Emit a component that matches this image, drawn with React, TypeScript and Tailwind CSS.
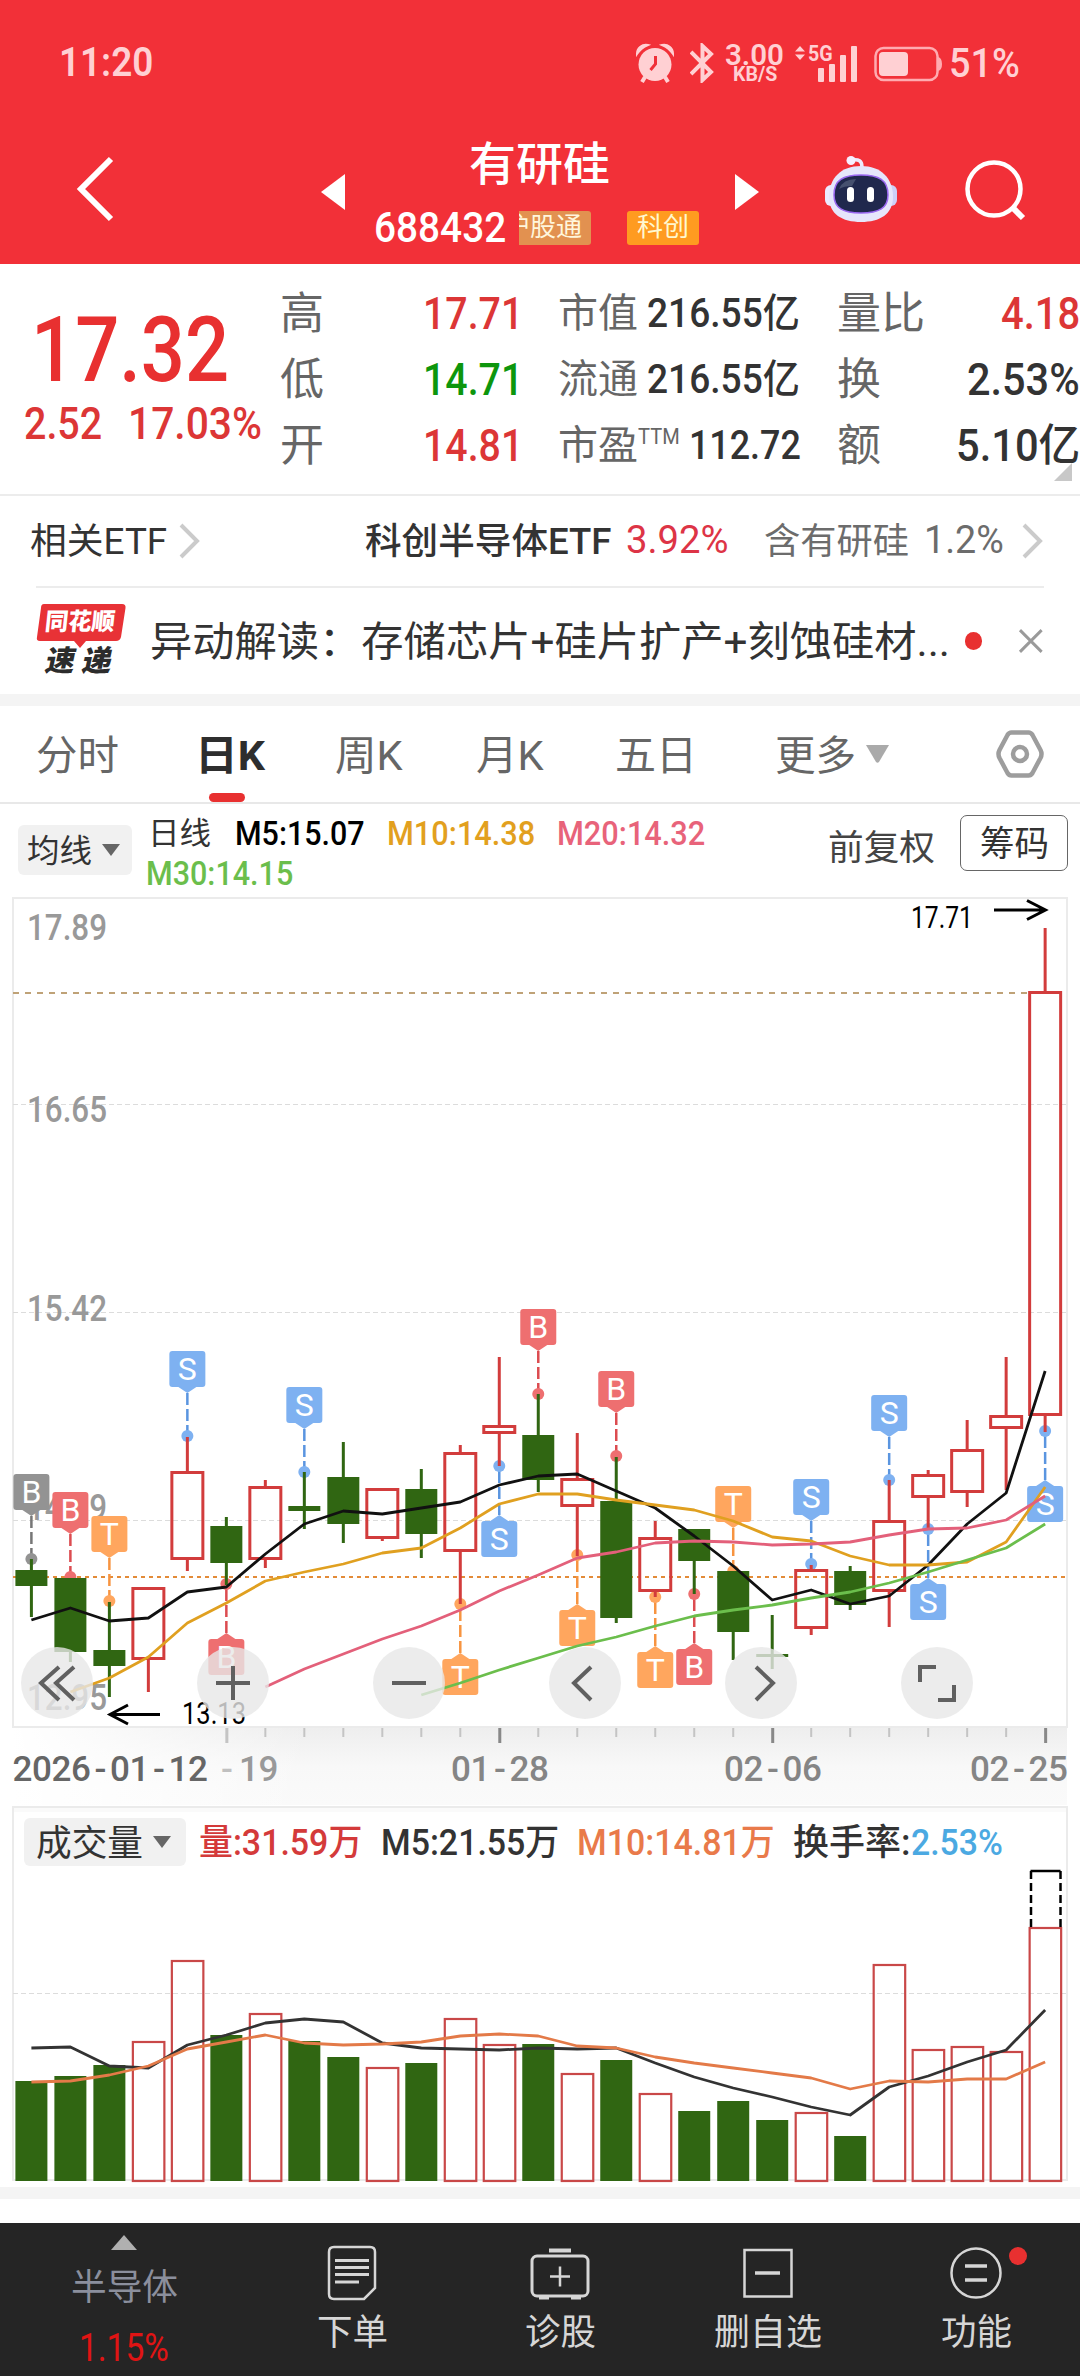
import { useLayoutEffect, useRef, useState, type ReactNode } from "react";

/** Single-line label whose glyphs are condensed or widened to fill its box. */
function Fit({ className = "", children }: { className?: string; children: ReactNode }) {
  const box = useRef<HTMLSpanElement>(null);
  const inner = useRef<HTMLSpanElement>(null);
  const [scale, setScale] = useState(1);
  useLayoutEffect(() => {
    if (box.current && inner.current && inner.current.offsetWidth > 0) {
      setScale(box.current.clientWidth / inner.current.offsetWidth);
    }
  }, []);
  return (
    <span ref={box} className={`inline-flex shrink-0 justify-start whitespace-nowrap leading-none ${className}`}>
      <span ref={inner} className="inline-block shrink-0 origin-left" style={{ transform: `scaleX(${scale})` }}>
        {children}
      </span>
    </span>
  );
}

function StatusBar() {
  return (
    <div className="flex h-[126px] items-center pl-[59px] text-[#ffd0d3]">
      <Fit className="w-[94px] text-[40px] font-semibold">11:20</Fit>
      <svg className="ml-[483px] h-[40px] w-[38px]" viewBox="0 0 38 40" fill="currentColor">
        <circle cx="19" cy="21.5" r="16.5" />
        <path d="M1 11 A9 9 0 0 1 12 2 Q5 5 1 11Z M37 11 A9 9 0 0 0 26 2 Q33 5 37 11Z" stroke="currentColor" strokeWidth="2" />
        <path d="M9 34l-3 5M29 34l3 5" stroke="currentColor" strokeWidth="4" />
        <path d="M19.500 13v8l-5 6" fill="none" stroke="#f03038" strokeWidth="3" />
      </svg>
      <svg className="ml-[16px] h-[40px] w-[24px]" viewBox="0 0 24 40" fill="none" stroke="currentColor" strokeWidth="4">
        <path d="M1 9L21 29L12.500 37V3L21 11L1 31" />
      </svg>
      <div className="-mt-[2px] ml-[11px] flex flex-col items-center">
        <Fit className="w-[59px] text-[30px] font-semibold">3.00</Fit>
        <Fit className="-mt-[6px] w-[44px] text-[20px] font-bold">KB/S</Fit>
      </div>
      <div className="relative ml-[11px] h-[40px] w-[64px]">
        <svg className="h-[40px] w-[64px]" viewBox="0 0 64 40" fill="currentColor">
          <path d="M0 8.500L5 3l5 5.500zM0 11.500L5 17l5-5.500z" />
          <rect x="23" y="25" width="6" height="14" rx="1" />
          <rect x="34" y="21" width="6" height="18" rx="1" />
          <rect x="45" y="12" width="6" height="27" rx="1" />
          <rect x="56" y="3" width="6" height="36" rx="1" />
        </svg>
        <Fit className="absolute left-[13px] top-0 w-[25px] text-[22px] font-bold">5G</Fit>
      </div>
      <svg className="ml-[15px] mt-[1px] h-[36px] w-[68px]" viewBox="0 0 68 36">
        <rect x="1.500" y="2" width="62" height="32" rx="8" fill="none" stroke="#ffabb0" strokeWidth="2.500" />
        <rect x="5" y="6" width="29" height="24" rx="4" fill="currentColor" />
        <path d="M64 11q4 1 4 7t-4 7z" fill="#ffabb0" />
      </svg>
      <Fit className="ml-[7px] w-[71px] translate-y-px text-[40px] font-medium">51%</Fit>
    </div>
  );
}

function Robot() {
  return (
    <svg className="ml-[65px] h-[68px] w-[74px]" viewBox="0 0 74 68">
      <path d="M28 5Q38 3 38 12" fill="none" stroke="#eeeafc" strokeWidth="3.500" />
      <circle cx="27" cy="5.500" r="4.500" fill="#f6efff" />
      <rect x="1" y="30" width="12" height="21" rx="6" fill="#eceaff" />
      <rect x="61" y="30" width="12" height="21" rx="6" fill="#cdd0f8" />
      <path d="M37 11C57 11 69 23 69 42C69 59 56 67 37 67C18 67 5 59 5 42C5 23 17 11 37 11Z" fill="#e6e6fb" />
      <path d="M37 20C55 20 64 25 64 40C64 53 55 58 37 58C19 58 10 53 10 40C10 25 19 20 37 20Z" fill="#20284d" stroke="#9a68f0" strokeWidth="1.500" />
      <path d="M15 34q4-10 17-10l-4 7q-8 0-13 3z" fill="#46506f" />
      <rect x="23" y="32" width="7" height="15" rx="3.500" fill="#fff" />
      <rect x="43" y="32" width="7" height="15" rx="3.500" fill="#fff" />
    </svg>
  );
}

function Header() {
  return (
    <header className="h-[264px] bg-[#f23038]">
      <StatusBar />
      <div className="flex h-[126px] items-center text-white">
        <svg className="ml-[75px] h-[66px] w-[40px]" viewBox="0 0 40 66" fill="none" stroke="currentColor" strokeWidth="6">
          <path d="M36 3L6 33L36 63" />
        </svg>
        <svg className="ml-[206px] mt-[6px] h-[36px] w-[24px]" viewBox="0 0 24 36" fill="currentColor">
          <path d="M24 0V36L0 18Z" />
        </svg>
        <div className="ml-[29px] mt-[7px] flex w-[326px] flex-col">
          <Fit className="ml-[95px] w-[141px] text-[46px] font-medium">有研硅</Fit>
          <div className="mt-[24px] flex h-[34px] items-center">
            <Fit className="w-[132px] text-[42px] font-medium">688432</Fit>
            <span className="ml-[13px] flex h-[34px] w-[72px] justify-end overflow-hidden rounded-r-[3px] bg-[#e29150] pr-[9px] text-[26px] leading-[32px] text-[#fff6dc]">
              <span className="shrink-0 whitespace-nowrap">沪股通</span>
            </span>
            <span className="ml-[36px] flex h-[34px] w-[72px] justify-center rounded-[3px] bg-[#ff9b20] text-[26px] leading-[32px] text-[#fff8d0]">
              科创
            </span>
          </div>
        </div>
        <svg className="ml-[35px] mt-[6px] h-[36px] w-[24px]" viewBox="0 0 24 36" fill="currentColor">
          <path d="M0 0V36L24 18Z" />
        </svg>
        <Robot />
        <svg className="ml-[66px] mt-[4px] h-[64px] w-[64px]" viewBox="0 0 64 64" fill="none" stroke="currentColor" strokeWidth="4.500">
          <circle cx="30" cy="30" r="26.500" />
          <path d="M48 48L59 59" strokeWidth="6" />
        </svg>
      </div>
    </header>
  );
}

function Quote() {
  return (
    <section className="relative flex h-[232px] border-b-2 border-[#ececec] text-[#333]">
      <div className="w-[280px] pt-[41px] text-[#e83030]">
        <Fit className="ml-[31px] w-[198px] text-[91px] font-medium">17.32</Fit>
        <div className="mt-[5px] flex text-[45px] font-medium text-[#dc3636]">
          <Fit className="ml-[24px] w-[78px]">2.52</Fit>
          <Fit className="ml-[26px] w-[134px]">17.03%</Fit>
        </div>
      </div>
      <div className="w-[278px] pt-[17px] text-[44px]">
        <div className="flex h-[66px] items-center">
          <span className="w-[143px] leading-none text-[#666]">高</span>
          <Fit className="w-[100px] font-medium text-[#dc3636]">17.71</Fit>
        </div>
        <div className="flex h-[66px] items-center">
          <span className="w-[143px] leading-none text-[#666]">低</span>
          <Fit className="w-[100px] font-medium text-[#0d960d]">14.71</Fit>
        </div>
        <div className="flex h-[66px] items-center">
          <span className="w-[143px] leading-none text-[#666]">开</span>
          <Fit className="w-[100px] font-medium text-[#dc3636]">14.81</Fit>
        </div>
      </div>
      <div className="w-[279px] pt-[17px] text-[40px]">
        <div className="flex h-[66px] items-center">
          <Fit className="w-[80px] text-[#666]">市值</Fit>
          <Fit className="ml-[9px] w-[153px] font-medium">216.55亿</Fit>
        </div>
        <div className="flex h-[66px] items-center">
          <Fit className="w-[80px] text-[#666]">流通</Fit>
          <Fit className="ml-[9px] w-[153px] font-medium">216.55亿</Fit>
        </div>
        <div className="flex h-[66px] items-center">
          <Fit className="w-[80px] text-[#666]">市盈</Fit>
          <Fit className="mb-[18px] w-[42px] text-[22px] text-[#666]">TTM</Fit>
          <Fit className="ml-[9px] w-[112px] font-medium">112.72</Fit>
        </div>
      </div>
      <div className="w-[243px] pt-[17px] text-[44px]">
        <div className="flex h-[66px] items-center justify-between">
          <Fit className="w-[88px] text-[#666]">量比</Fit>
          <Fit className="w-[79px] font-medium text-[#dc3636]">4.18</Fit>
        </div>
        <div className="flex h-[66px] items-center justify-between">
          <Fit className="w-[44px] text-[#666]">换</Fit>
          <Fit className="w-[113px] font-medium">2.53%</Fit>
        </div>
        <div className="flex h-[66px] items-center justify-between">
          <Fit className="w-[44px] text-[#666]">额</Fit>
          <Fit className="w-[124px] font-medium">5.10亿</Fit>
        </div>
      </div>
      <svg className="absolute right-[8px] bottom-[13px] h-[18px] w-[18px]" viewBox="0 0 18 18" fill="#c8c8c8">
        <path d="M18 0V18H0Z" />
      </svg>
    </section>
  );
}

function Chevron({ className }: { className: string }) {
  return (
    <svg className={`h-[36px] w-[21px] ${className}`} viewBox="0 0 21 36" fill="none" stroke="#cbcbcb" strokeWidth="4">
      <path d="M2 2L18 18L2 34" />
    </svg>
  );
}

function EtfRow() {
  return (
    <div className="flex h-[90px] items-center text-[36px] text-[#333]">
      <Fit className="ml-[30px] w-[137px] translate-y-px">相关ETF</Fit>
      <Chevron className="ml-[12px]" />
      <Fit className="ml-[165px] w-[246px] translate-y-px font-medium">科创半导体ETF</Fit>
      <Fit className="ml-[15px] mb-[1px] w-[103px] text-[39px] text-[#dd3446]">3.92%</Fit>
      <Fit className="ml-[35px] w-[145px] translate-y-px text-[#6c6c6c]">含有研硅</Fit>
      <Fit className="ml-[15px] mb-[1px] w-[80px] text-[39px] text-[#6c6c6c]">1.2%</Fit>
      <Chevron className="ml-[18px]" />
    </div>
  );
}

function NewsRow() {
  return (
    <div className="mx-[36px] flex h-[108px] items-center border-t-2 border-[#ececec] text-[#333]">
      <div className="relative h-[74px] w-[90px]">
        <svg className="absolute top-0 left-0 h-[44px] w-[90px]" viewBox="0 0 90 44" fill="#e83236">
          <path d="M8 0H86Q90 0 89.500 4L85 33Q84 37 80 37H50L44 44L38 37H4Q0 37 1 33L5 4Q5 0 8 0Z" />
        </svg>
        <Fit className="absolute top-[6px] left-[9px] w-[70px] -skew-x-6 text-[24px] font-black text-white">同花顺</Fit>
        <Fit className="absolute top-[43px] left-[10px] w-[66px] -skew-x-12 text-[29px] font-black text-[#2c2c2c]">速 递</Fit>
      </div>
      <Fit className="ml-[25px] w-[800px] translate-y-px text-[41px]">异动解读：存储芯片+硅片扩产+刻蚀硅材...</Fit>
      <span className="ml-[15px] h-[18px] w-[18px] rounded-full bg-[#e83030]" />
      <svg className="ml-[36px] h-[26px] w-[26px]" viewBox="0 0 26 26" fill="none" stroke="#9a9a9a" strokeWidth="3">
        <path d="M2 2L24 24M24 2L2 24" />
      </svg>
    </div>
  );
}

function Tabs() {
  return (
    <nav className="relative flex h-[98px] items-center border-b-2 border-[#e8e8e8] text-[41px] text-[#666]">
      <Fit className="ml-[36px] w-[83px] translate-y-[2px]">分时</Fit>
      <Fit className="ml-[76px] w-[70px] translate-y-[2px] font-bold text-[#2e2e2e]">日K</Fit>
      <Fit className="ml-[70px] w-[68px] translate-y-[2px]">周K</Fit>
      <Fit className="ml-[73px] w-[68px] translate-y-[2px]">月K</Fit>
      <Fit className="ml-[71px] w-[82px] translate-y-[2px]">五日</Fit>
      <Fit className="ml-[78px] w-[81px] translate-y-[2px]">更多</Fit>
      <svg className="ml-[10px] h-[18px] w-[23px]" viewBox="0 0 23 18" fill="#aaa">
        <path d="M0 0H23L13 17Q11.500 18.500 10 17Z" />
      </svg>
      <svg className="ml-[107px] h-[48px] w-[48px]" viewBox="0 0 48 48" fill="none" stroke="#9d9d9d">
        <path d="M15.500 2.500H32.500Q35 2.500 36.500 5L44.500 20Q46.500 24 44.500 28L36.500 43Q35 45.500 32.500 45.500H15.500Q13 45.500 11.500 43L3.500 28Q1.500 24 3.500 20L11.500 5Q13 2.500 15.500 2.500Z" strokeWidth="4.500" />
        <circle cx="24" cy="24" r="7" strokeWidth="4.500" />
      </svg>
      <span className="absolute bottom-0 left-[209px] h-[9px] w-[36px] rounded-full bg-[#e83030]" />
    </nav>
  );
}

function DropArrow({ className }: { className: string }) {
  return (
    <svg className={`h-[12px] w-[18px] ${className}`} viewBox="0 0 18 12" fill="#666">
      <path d="M0 0H18L9 12Z" />
    </svg>
  );
}

function Averages() {
  return (
    <div className="flex h-[92px] pl-[18px] text-[#333]">
      <div className="mt-[21px] flex h-[50px] w-[114px] items-center rounded-[6px] bg-[#f1f1f1] pl-[9px] text-[32px]">
        <Fit className="w-[65px] translate-y-px">均线</Fit>
        <DropArrow className="ml-[10px]" />
      </div>
      <div className="ml-[14px] w-[680px] pt-[12px] text-[33px] font-medium">
        <div className="flex h-[34px] items-center">
          <Fit className="ml-[2px] w-[63px] text-[31px] font-normal">日线</Fit>
          <Fit className="ml-[24px] w-[130px] text-black">M5:15.07</Fit>
          <Fit className="ml-[22px] w-[148px] text-[#e2a01e]">M10:14.38</Fit>
          <Fit className="ml-[22px] w-[148px] text-[#e8637a]">M20:14.32</Fit>
        </div>
        <div className="mt-[6px] flex h-[34px] items-center">
          <Fit className="w-[147px] text-[#6bbe4c]">M30:14.15</Fit>
        </div>
      </div>
      <Fit className="ml-[2px] mt-[27px] w-[107px] text-[35px] text-[#444]">前复权</Fit>
      <div className="ml-[25px] mt-[11px] flex h-[56px] w-[108px] items-center justify-center rounded-[7px] border border-[#666] text-[35px]">
        <Fit className="w-[69px] translate-y-px">筹码</Fit>
      </div>
    </div>
  );
}

const RED = "#d23c3c";
const GREEN = "#306612";
const xAt = (i: number) => 31.4 + i * 38.99;

// [rising, high, body top, body bottom, low] in chart pixels
const candles: [number, number, number, number, number][] = [
  [0, 1559, 1570, 1586, 1617], [0, 1578, 1578, 1652, 1662], [0, 1602, 1650, 1666, 1697],
  [1, 1587, 1587, 1660, 1692], [1, 1437, 1471, 1560, 1571], [0, 1517, 1526, 1563, 1585],
  [1, 1480, 1486, 1560, 1568], [0, 1472, 1506, 1511, 1529], [0, 1442, 1477, 1524, 1543],
  [1, 1488, 1488, 1539, 1541], [0, 1469, 1489, 1534, 1558], [1, 1445, 1452, 1552, 1604],
  [1, 1357, 1425, 1434, 1466], [0, 1394, 1435, 1480, 1492], [1, 1433, 1478, 1507, 1556],
  [0, 1457, 1501, 1618, 1623], [1, 1521, 1537, 1592, 1597], [0, 1529, 1529, 1561, 1594],
  [0, 1571, 1571, 1632, 1660], [0, 1615, 1654, 1657, 1669], [1, 1565, 1569, 1629, 1635],
  [0, 1566, 1571, 1605, 1610], [1, 1480, 1520, 1592, 1627], [1, 1470, 1474, 1498, 1529],
  [1, 1420, 1449, 1493, 1507], [1, 1357, 1415, 1429, 1490], [1, 928, 991, 1416, 1432],
];

const ma5 = [1620, 1608, 1621, 1618, 1592, 1587, 1554, 1524, 1511, 1514, 1508, 1502, 1485, 1476, 1474, 1491, 1508, 1536, 1566, 1600, 1590, 1604, 1596, 1565, 1524, 1493, 1371];
const ma10 = [1692, 1678, 1657, 1623, 1603, 1581, 1572, 1564, 1553, 1548, 1528, 1504, 1494, 1494, 1500, 1505, 1510, 1521, 1537, 1541, 1556, 1565, 1565, 1562, 1542, 1487];
const ma20 = [1687, 1669, 1654, 1639, 1626, 1610, 1591, 1575, 1558, 1552, 1543, 1541, 1542, 1545, 1544, 1542, 1535, 1529, 1528, 1520, 1496];
const ma30 = [1695, 1683, 1670, 1658, 1646, 1637, 1626, 1616, 1610, 1605, 1598, 1592, 1583, 1572, 1560, 1548, 1524];

const points = (ys: number[], start = 0) => ys.map((y, k) => `${xAt(start + k)},${y}`).join(" ");

const BLUE = ["#7eb1f1", "#5a95e0"];
const ROSE = ["#ee6f70", "#dc4c50"];
const ORANGE = ["#ffa65e", "#f79440"];
const GRAY = ["#939393", "#777777"];
// [candle index, letter, palette, dot y, badge above the dot]
const markers: [number, string, string[], number, boolean][] = [
  [0, "B", GRAY, 1559, true], [1, "B", ROSE, 1577, true], [2, "T", ORANGE, 1601, true],
  [4, "S", BLUE, 1436, true], [5, "B", ROSE, 1584, false], [7, "S", BLUE, 1472, true],
  [11, "T", ORANGE, 1604, false], [12, "S", BLUE, 1466, false], [13, "B", ROSE, 1394, true],
  [14, "T", ORANGE, 1555, false], [15, "B", ROSE, 1456, true], [16, "T", ORANGE, 1597, false],
  [17, "B", ROSE, 1594, false], [18, "T", ORANGE, 1571, true], [20, "S", BLUE, 1564, true],
  [22, "S", BLUE, 1480, true], [23, "S", BLUE, 1529, false], [26, "S", BLUE, 1431, false],
];

function Marker({ i, letter, palette, y, above }: { i: number; letter: string; palette: string[]; y: number; above: boolean }) {
  const x = xAt(i);
  const top = above ? y - 85 : y + 55;
  const edge = above ? top + 36 : top;
  const tip = above ? edge + 6 : edge - 6;
  return (
    <g>
      <line x1={x} x2={x} y1={tip} y2={y} stroke={palette[1]} strokeWidth="2.500" strokeDasharray="12 4" />
      <circle cx={x} cy={y} r="6" fill={palette[0]} />
      <path d={`M${x - 9} ${edge}H${x + 9}L${x} ${tip}Z`} fill={palette[0]} />
      <rect x={x - 18} y={top} width="36" height="36" rx="3" fill={palette[0]} />
      <text x={x} y={top + 29} textAnchor="middle" fontSize="32" fill="#fff">{letter}</text>
    </g>
  );
}

function ChartText({ x, y, w, size, fill, weight = 400, children }: { x: number; y: number; w: number; size: number; fill: string; weight?: number; children: string }) {
  return (
    <text x={x} y={y} textLength={w} lengthAdjust="spacingAndGlyphs" fontSize={size} fill={fill} fontWeight={weight}>
      {children}
    </text>
  );
}

/** Date under the axis, one glyph per equal cell. */
function AxisDate({ x, fill, children }: { x: number; fill: string; children: string }) {
  const cells = [...children].map((c, k) => x + k * 19.5 + (c === "-" ? 4 : 0)).join(" ");
  return (
    <text x={cells} y={1781} fontSize={35} fill={fill} fontWeight={500}>
      {children}
    </text>
  );
}

function CandleChart() {
  return (
    <svg className="block h-[909px] w-[1080px]" viewBox="0 896 1080 909">
      <defs>
        <linearGradient id="axisFade" x1="0" x2="0" y1="0" y2="1">
          <stop offset="0" stopColor="#eeeeee" />
          <stop offset="0.500" stopColor="#f8f8f8" />
          <stop offset="1" stopColor="#fafafa" />
        </linearGradient>
        <linearGradient id="axisLeft" x1="0" x2="1" y1="0" y2="0">
          <stop offset="0" stopColor="#fff" />
          <stop offset="1" stopColor="#fff" stopOpacity="0" />
        </linearGradient>
      </defs>
      <rect x="13" y="1728" width="1054" height="77" fill="url(#axisFade)" />
      <rect x="12" y="1728" width="300" height="77" fill="url(#axisLeft)" />
      <rect x="13" y="898" width="1054" height="829" fill="none" stroke="#ebebeb" strokeWidth="2" />
      <path d="M13 1104.500H1067M13 1312.500H1067M13 1520.500H1067" stroke="#dcdcdc" strokeDasharray="5 3" />
      <path d="M13 993H1029" stroke="#bfa277" strokeWidth="2" strokeDasharray="6 6" />
      <path d="M13 1577H1067" stroke="#e38b38" strokeWidth="2" strokeDasharray="4 4" />

      <ChartText x={27} y={940} w={80} size={36} fill="#999" weight={500}>17.89</ChartText>
      <ChartText x={27} y={1122} w={80} size={36} fill="#999" weight={500}>16.65</ChartText>
      <ChartText x={27} y={1321} w={80} size={36} fill="#999" weight={500}>15.42</ChartText>
      <ChartText x={27} y={1520} w={80} size={36} fill="#999" weight={500}>14.19</ChartText>
      <ChartText x={27} y={1710} w={80} size={36} fill="#999" weight={500}>12.95</ChartText>

      {markers.map(([i, letter, palette, y, above]) => (
        <Marker key={i} i={i} letter={letter} palette={palette} y={y} above={above} />
      ))}

      {candles.map(([up, high, top, bottom, low], i) => {
        const x = xAt(i);
        return up ? (
          <g key={i} fill="none" stroke={RED} strokeWidth="3">
            <path d={`M${x} ${high}V${top}M${x} ${bottom}V${low}`} />
            <rect x={x - 15.5} y={top + 1.5} width="31" height={bottom - top - 3} />
          </g>
        ) : (
          <g key={i} fill={GREEN}>
            <rect x={x - 1.5} y={high} width="3" height={low - high} />
            <rect x={x - 16} y={top} width="32" height={bottom - top} />
          </g>
        );
      })}

      <g fill="none" strokeWidth="2.800" strokeLinejoin="round">
        <polyline points={points(ma5)} stroke="#111" />
        <polyline points={points(ma10, 1)} stroke="#e0a020" />
        <polyline points={points(ma20, 6)} stroke="#e3607a" />
        <polyline points={points(ma30, 10)} stroke="#6bbe4c" />
      </g>

      <g fill="none" stroke="#000" strokeWidth="3">
        <path d="M994 910H1045M1027 900.500L1045.500 910L1027 919.500" />
        <path d="M160 1714.500H111M128 1705L110 1714.500L128 1724" />
      </g>
      <ChartText x={911} y={928} w={62} size={31} fill="#000">17.71</ChartText>
      <ChartText x={182} y={1724} w={64} size={31} fill="#000">13.13</ChartText>

      {candles.map((_, i) =>
        i < 5 ? null : (
          <rect key={i} x={xAt(i) - 1} y={1728} width={(i - 5) % 7 ? 2 : 3} height={(i - 5) % 7 ? 9 : 15} fill={(i - 5) % 7 || i === 5 ? "#c4c4c4" : "#888"} />
        ),
      )}
      <AxisDate x={12.5} fill="#666">2026-01-12</AxisDate>
      <AxisDate x={217} fill="#c0c0c0">-</AxisDate>
      <AxisDate x={239} fill="#999">19</AxisDate>
      <AxisDate x={451} fill="#858585">01-28</AxisDate>
      <AxisDate x={724} fill="#858585">02-06</AxisDate>
      <AxisDate x={970} fill="#858585">02-25</AxisDate>
    </svg>
  );
}

const controls = [
  "M38 20L20 36L38 53M53 20L35 36L53 53",
  "M19 36H53M36 19V53",
  "M19 36H53",
  "M42 20L25 36L42 53",
  "M31 20L48 36L31 53",
  "M19 35V20H35M53 38V53H37",
];

function ChartControls() {
  return (
    <div className="absolute top-[751px] left-[21px] flex gap-[104px]">
      {controls.map((d) => (
        <button key={d} className="h-[72px] w-[72px] rounded-full bg-[#e7e7e7]/80">
          <svg viewBox="0 0 72 72" fill="none" stroke="#606060" strokeWidth="4">
            <path d={d} />
          </svg>
        </button>
      ))}
    </div>
  );
}

// [rising, bar top] in chart pixels
const volumes: [number, number][] = [
  [0, 2081], [0, 2076], [0, 2065], [1, 2041], [1, 1960], [0, 2035], [1, 2013], [0, 2041], [0, 2057],
  [1, 2067], [0, 2063], [1, 2018], [1, 2044], [0, 2044], [1, 2073], [0, 2060], [1, 2093], [0, 2111],
  [0, 2101], [0, 2120], [1, 2112], [0, 2136], [1, 1964], [1, 2049], [1, 2046], [1, 2051], [1, 1927],
];
const vol5 = [2048, 2047, 2066, 2068, 2045, 2035, 2023, 2019, 2022, 2043, 2048, 2049, 2050, 2048, 2049, 2048, 2063, 2077, 2088, 2097, 2107, 2115, 2087, 2076, 2062, 2050, 2010];
const vol10 = [2082, 2081, 2075, 2066, 2049, 2042, 2035, 2043, 2045, 2044, 2042, 2036, 2034, 2036, 2046, 2048, 2057, 2063, 2068, 2073, 2078, 2089, 2081, 2082, 2079, 2079, 2062];

function VolumeChart() {
  return (
    <section className="relative h-[382px] text-[#333]">
      <svg className="block h-[382px] w-[1080px]" viewBox="0 1805 1080 382">
        <rect x="13" y="1807" width="1054" height="5" fill="#fafafa" />
        <rect x="13" y="1807" width="1054" height="373" fill="none" stroke="#ebebeb" strokeWidth="2" />
        <path d="M13 1993.500H1067" stroke="#dcdcdc" strokeDasharray="5 3" />
        {volumes.map(([up, top], i) =>
          up ? (
            <rect key={i} x={xAt(i) - 15.5} y={top + 1} width="31.500" height={2180 - top} fill="none" stroke="#c94848" strokeWidth="2.200" />
          ) : (
            <rect key={i} x={xAt(i) - 16} y={top} width="32" height={2181 - top} fill={GREEN} />
          ),
        )}
        <path d="M1030.500 1871H1060.500" stroke="#000" strokeWidth="2.500" />
        <path d="M1031 1871V1927M1060.500 1871V1927" stroke="#000" strokeWidth="2.500" strokeDasharray="8 4" />
        <g fill="none" strokeWidth="2.800" strokeLinejoin="round">
          <polyline points={points(vol5)} stroke="#333" />
          <polyline points={points(vol10)} stroke="#e37a48" />
        </g>
      </svg>
      <div className="absolute top-[13px] left-[24px] flex h-[48px] items-center text-[36px] font-medium">
        <div className="flex h-[48px] w-[162px] items-center rounded-[6px] bg-[#f1f1f1] pl-[12px]">
          <Fit className="w-[107px] translate-y-[2px] font-normal">成交量</Fit>
          <DropArrow className="ml-[10px]" />
        </div>
        <Fit className="ml-[13px] w-[163px] translate-y-px text-[#d43a3a]">量:31.59万</Fit>
        <Fit className="ml-[19px] w-[178px] translate-y-px">M5:21.55万</Fit>
        <Fit className="ml-[18px] w-[198px] translate-y-px text-[#e97a4a]">M10:14.81万</Fit>
        <Fit className="ml-[18px] w-[118px] translate-y-px">换手率:</Fit>
        <Fit className="w-[92px] translate-y-px text-[#4ba9e2]">2.53%</Fit>
      </div>
    </section>
  );
}

function BottomNav() {
  return (
    <footer className="flex h-[153px] bg-[#252525] text-[36px] text-[#d6d6d6]">
      <div className="flex w-[248px] flex-col items-center">
        <svg className="mt-[12px] h-[15px] w-[26px]" viewBox="0 0 26 15" fill="#b0b0b0">
          <path d="M13 0L26 15H0Z" />
        </svg>
        <Fit className="mt-[20px] w-[107px] text-[#8b8f9d]">半导体</Fit>
        <Fit className="mt-[23px] w-[90px] text-[39px] text-[#e01414]">1.15%</Fit>
      </div>
      <div className="flex w-[208px] flex-col items-center">
        <svg className="mt-[22px] h-[56px] w-[50px]" viewBox="0 0 50 56" fill="none" stroke="currentColor" strokeWidth="2.500">
          <path d="M7 2H43Q48 2 48 7V43L37 54H7Q2 54 2 49V7Q2 2 7 2Z" />
          <path d="M8 15.500H42M8 22.500H42M8 29.500H42M8 37H32" strokeWidth="3" />
        </svg>
        <Fit className="mt-[14px] w-[71px]">下单</Fit>
      </div>
      <div className="flex w-[208px] flex-col items-center">
        <svg className="mt-[22px] h-[56px] w-[60px]" viewBox="0 0 60 56" fill="none" stroke="currentColor" strokeWidth="2.500">
          <path d="M19 5.500H41M9 52.500H19M41 52.500H51" strokeWidth="4" />
          <rect x="2" y="11" width="56" height="40" rx="5" strokeWidth="3" />
          <path d="M20 31.500H40M30 21.500V41.500" />
        </svg>
        <Fit className="mt-[14px] w-[71px]">诊股</Fit>
      </div>
      <div className="flex w-[208px] flex-col items-center">
        <svg className="mt-[22px] h-[56px] w-[50px]" viewBox="0 0 50 56" fill="none" stroke="currentColor" strokeWidth="2.500">
          <rect x="1.500" y="5" width="47" height="46.500" />
          <path d="M12 28H37" strokeWidth="3.500" />
        </svg>
        <Fit className="mt-[14px] w-[108px]">删自选</Fit>
      </div>
      <div className="relative flex w-[208px] flex-col items-center">
        <svg className="mt-[22px] h-[56px] w-[52px]" viewBox="0 0 52 56" fill="none" stroke="currentColor" strokeWidth="2.500">
          <circle cx="26" cy="28" r="24.500" />
          <path d="M15 21H37M15 35H37" strokeWidth="3.500" />
        </svg>
        <Fit className="mt-[14px] w-[71px]">功能</Fit>
        <span className="absolute top-[24px] left-[137px] h-[18px] w-[18px] rounded-full bg-[#e83030]" />
      </div>
    </footer>
  );
}

export default function App() {
  return (
    <div className="w-[1080px] overflow-hidden bg-white font-['Roboto','Noto_Sans_CJK_SC',sans-serif]">
      <Header />
      <Quote />
      <EtfRow />
      <NewsRow />
      <div className="h-[12px] bg-[#f4f4f4]" />
      <Tabs />
      <Averages />
      <div className="relative">
        <CandleChart />
        <ChartControls />
      </div>
      <VolumeChart />
      <div className="mb-[24px] h-[12px] bg-[#f4f4f4]" />
      <BottomNav />
    </div>
  );
}
